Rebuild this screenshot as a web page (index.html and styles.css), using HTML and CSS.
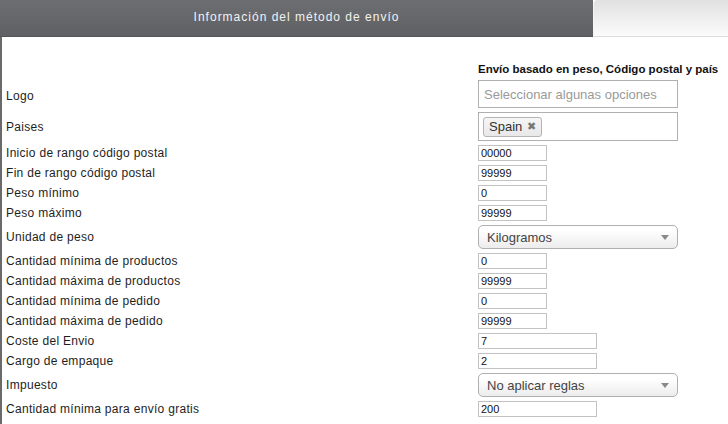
FILE: index.html
```html
<!DOCTYPE html>
<html lang="es">
<head>
<meta charset="utf-8">
<title>Información del método de envío</title>
<link rel="stylesheet" href="styles.css">
</head>
<body>
<div class="tabs">
  <div class="tab tab-active">Información del método de envío</div>
  <div class="tab tab-rest"></div>
</div>
<div class="panel">
  <div class="form">
    <div class="label"></div>
    <div class="heading">Envío basado en peso, Código postal y país</div>

    <div class="label label-low">Logo</div>
    <div class="chosen chosen-multi"><span class="placeholder">Seleccionar algunas opciones</span></div>

    <div class="label">Paises</div>
    <div class="chosen chosen-multi chosen-tall"><span class="tag">Spain <span class="tag-x">✖</span></span></div>

    <div class="label">Inicio de rango código postal</div>
    <div><input class="inp" type="text" value="00000"></div>

    <div class="label">Fin de rango código postal</div>
    <div><input class="inp" type="text" value="99999"></div>

    <div class="label">Peso mínimo</div>
    <div><input class="inp" type="text" value="0"></div>

    <div class="label">Peso máximo</div>
    <div><input class="inp" type="text" value="99999"></div>

    <div class="label">Unidad de peso</div>
    <div class="select"><span>Kilogramos</span><span class="arrow"></span></div>

    <div class="label">Cantidad mínima de productos</div>
    <div><input class="inp" type="text" value="0"></div>

    <div class="label">Cantidad máxima de productos</div>
    <div><input class="inp" type="text" value="99999"></div>

    <div class="label">Cantidad mínima de pedido</div>
    <div><input class="inp" type="text" value="0"></div>

    <div class="label">Cantidad máxima de pedido</div>
    <div><input class="inp" type="text" value="99999"></div>

    <div class="label">Coste del Envio</div>
    <div><input class="inp inp-wide" type="text" value="7"></div>

    <div class="label">Cargo de empaque</div>
    <div><input class="inp inp-wide" type="text" value="2"></div>

    <div class="label">Impuesto</div>
    <div class="select"><span>No aplicar reglas</span><span class="arrow"></span></div>

    <div class="label">Cantidad mínima para envío gratis</div>
    <div><input class="inp inp-wide" type="text" value="200"></div>
  </div>
</div>
</body>
</html>
```
FILE: styles.css
```css
html, body {
  margin: 0;
  padding: 0;
  background: #fff;
  font-family: "Liberation Sans", Arial, sans-serif;
  color: #1e1e1e;
  overflow: hidden;
  height: 424px;
}

.tabs {
  display: flex;
  height: 37px;
}

.tab-active {
  width: 593px;
  height: 36px;
  background: linear-gradient(#6d6e72, #5f6064);
  border-bottom: 1px solid #555659;
  color: #f2f2f2;
  font-size: 12px;
  letter-spacing: 1px;
  text-align: center;
  line-height: 34px;
}

.tab-rest {
  flex: 1;
  height: 36px;
  background: linear-gradient(#e2e1e2, #fbfbfb);
  border-top-left-radius: 4px;
  border-left: 1px solid #f4f4f4;
  border-bottom: 1px solid #dcdcdc;
}

.panel {
  border-left: 2px solid #6a6a6a;
  padding: 25px 0 0 4px;
  height: 387px;
  box-sizing: border-box;
}

.form {
  display: grid;
  grid-template-columns: 472px 1fr;
  row-gap: 4px;
  align-items: center;
}

.label {
  font-size: 12px;
  letter-spacing: 0.3px;
  line-height: 14px;
}

.label-low {
  padding-top: 3px;
}

.heading {
  font-size: 11.5px;
  font-weight: bold;
  line-height: 14px;
  color: #111;
}

.chosen {
  width: 200px;
  box-sizing: border-box;
  border: 1px solid #b0b0b0;
  background: #fff;
  display: flex;
  align-items: center;
}

.chosen-multi {
  height: 28px;
  padding-left: 5px;
}

.chosen-tall {
  height: 29px;
  padding-left: 4px;
}

.placeholder {
  font-size: 13px;
  color: #9a9a9a;
}

.tag {
  display: inline-flex;
  align-items: center;
  height: 20px;
  box-sizing: border-box;
  padding: 0 5px 0 5px;
  border: 1px solid #b4b4b4;
  border-radius: 3px;
  background: linear-gradient(#f6f6f6, #e8e8e8);
  font-size: 13px;
  color: #333;
}

.tag-x {
  font-size: 11px;
  color: #777;
  margin-left: 5px;
}

.inp {
  display: block;
  width: 69px;
  height: 16px;
  box-sizing: border-box;
  margin: 0;
  padding: 0 0 0 2px;
  border: 1px solid #c2c2c2;
  font-family: "Liberation Sans", Arial, sans-serif;
  font-size: 11px;
  color: #111;
  background: #fff;
  outline: none;
}

.inp-wide {
  width: 119px;
}

.select {
  width: 200px;
  height: 24px;
  box-sizing: border-box;
  border: 1px solid #b0b0b0;
  border-radius: 5px;
  background: linear-gradient(#ffffff 20%, #ececec);
  display: flex;
  align-items: center;
  justify-content: space-between;
  padding: 0 8px 0 8px;
  font-size: 13px;
  color: #444;
}

.arrow {
  width: 0;
  height: 0;
  border-left: 4px solid transparent;
  border-right: 4px solid transparent;
  border-top: 5px solid #888;
}
```
